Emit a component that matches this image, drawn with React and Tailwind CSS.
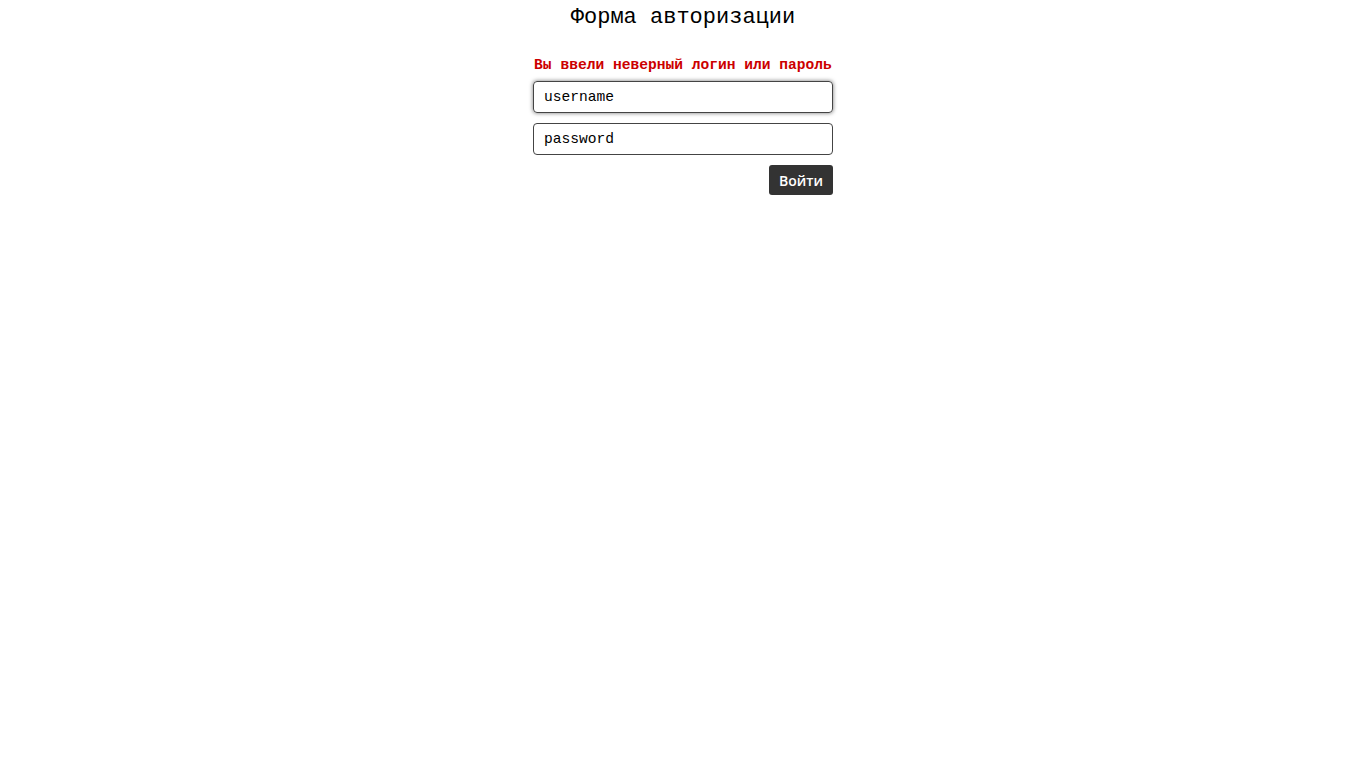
import React from "react";

export default function App() {
  const mono = { fontFamily: '"Liberation Mono", "DejaVu Sans Mono", monospace' };
  return (
    <div className="min-h-screen bg-white text-black" style={mono}>
      <div className="w-[300px] mx-auto flex flex-col">
        <h1 className="text-[22px] leading-[32px] text-center mt-[2px] whitespace-nowrap">Форма авторизации</h1>
        <p className="mt-[22px] text-[14.6px] leading-[18px] font-bold text-[#cc0000] text-center whitespace-nowrap">
          Вы ввели неверный логин или пароль
        </p>
        <input
          className="mt-[7px] h-[32px] w-full rounded-[4px] border border-[#444] px-[10px] text-[14.6px] outline-none shadow-[0_0_4px_rgba(0,0,0,0.55)]"
          style={mono}
          defaultValue="username"
        />
        <input
          className="mt-[10px] h-[32px] w-full rounded-[4px] border border-[#444] px-[10px] text-[14.6px] outline-none"
          style={mono}
          defaultValue="password"
        />
        <div className="flex justify-end mt-[10px]">
          <button
            className="h-[30px] px-[10px] rounded-[3px] bg-[#333] text-white text-[14px] font-semibold"
            style={{ fontFamily: '"Open Sans", "Noto Sans", sans-serif' }}
          >
            Войти
          </button>
        </div>
      </div>
    </div>
  );
}
